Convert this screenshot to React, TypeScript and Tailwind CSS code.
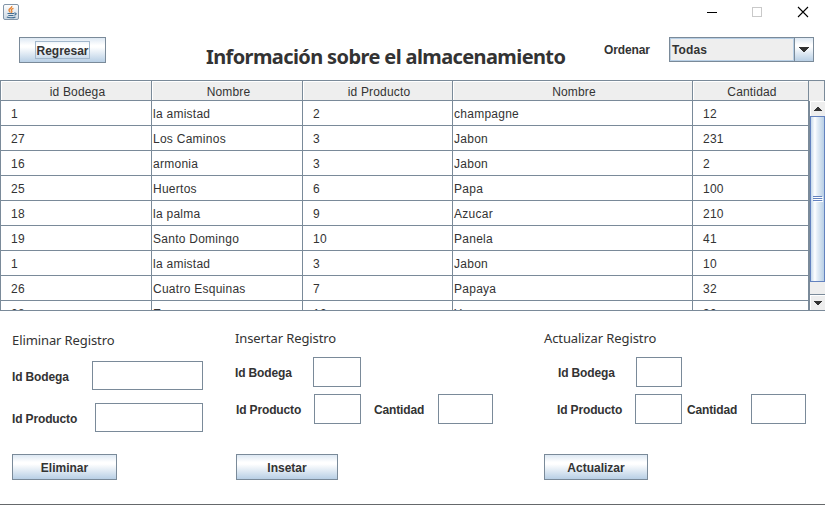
import React from "react";

const columns = [
  { title: "id Bodega", width: "w-[151px]", cell: "pl-[10px]" },
  { title: "Nombre", width: "w-[151px]", cell: "pl-px" },
  { title: "id Producto", width: "w-[150px]", cell: "pl-[10px]" },
  { title: "Nombre", width: "w-[240px]", cell: "pl-px" },
  { title: "Cantidad", width: "w-[116px]", cell: "pl-[10px]" },
];

const rows = [
  ["1", "la amistad", "2", "champagne", "12"],
  ["27", "Los Caminos", "3", "Jabon", "231"],
  ["16", "armonia", "3", "Jabon", "2"],
  ["25", "Huertos", "6", "Papa", "100"],
  ["18", "la palma", "9", "Azucar", "210"],
  ["19", "Santo Domingo", "10", "Panela", "41"],
  ["1", "la amistad", "3", "Jabon", "10"],
  ["26", "Cuatro Esquinas", "7", "Papaya", "32"],
  ["28", "Esperanza", "12", "Yuca", "30"],
];

const gradient = "bg-[linear-gradient(180deg,#dde8f3_0%,#ffffff_30%,#ffffff_38%,#b8cfe5_100%)]";

function Button({ children, className }: { children: React.ReactNode; className: string }) {
  return (
    <button
      className={`flex h-[26px] items-center justify-center border border-[#7a8a99] text-[12px] font-bold leading-none ${gradient} ${className}`}
    >
      {children}
    </button>
  );
}

function Field({ className }: { className: string }) {
  return (
    <div className={`shrink-0 border border-[#7a8a99] bg-white p-0 ${className}`}>
      <input className="block h-full w-full bg-transparent px-1 text-[12px] outline-none" />
    </div>
  );
}

function Label({ children, className = "" }: { children: React.ReactNode; className?: string }) {
  return (
    <label className={`shrink-0 whitespace-nowrap text-[12px] font-bold leading-[16px] tracking-[-0.14px] ${className}`}>
      {children}
    </label>
  );
}

function Heading({ children, className = "" }: { children: React.ReactNode; className?: string }) {
  return (
    <h2 className={`whitespace-nowrap font-['Noto_Sans',sans-serif] text-[13px] font-normal leading-[20px] tracking-[-0.1px] ${className}`}>
      {children}
    </h2>
  );
}

function JavaIcon() {
  return (
    <svg width="16" height="16" viewBox="0 0 16 16" className="mt-[4px] ml-[3px] shrink-0">
      <defs>
        <linearGradient id="tile" x1="0" y1="0" x2="0" y2="1">
          <stop offset="0" stopColor="#ffffff" />
          <stop offset="1" stopColor="#cbd7e2" />
        </linearGradient>
      </defs>
      <rect x="0.5" y="0.5" width="15" height="15" rx="1.5" fill="url(#tile)" stroke="#8295a8" />
      <path d="M8.8 2C9.5 4 5.5 4.6 6 6.3C6.2 7.3 7.1 7.5 7.2 8.5M10.5 4.3C7.6 5.3 8.1 6.2 8.8 7C9.3 7.7 8.8 8.2 8.2 8.7" fill="none" stroke="#e78330" strokeWidth="1.3" />
      <path d="M4.5 9.5H11M5.3 11.5H10.5M3.8 13.1C6 14.1 10.5 14 12.5 12.9M11.2 9.1C14 8.6 13.7 10.7 11.3 11.3" fill="none" stroke="#426d92" strokeWidth="1.1" />
    </svg>
  );
}

function Arrow({ up = false }: { up?: boolean }) {
  return (
    <svg width="8" height="4" viewBox="0 0 8 4" shapeRendering="crispEdges">
      <path d={up ? "M3 0H5V1H6V2H7V3H8V4H0V3H1V2H2V1H3Z" : "M0 0H8V1H7V2H6V3H5V4H3V3H2V2H1V1H0Z"} fill="#333" />
    </svg>
  );
}

function Scrollbar() {
  return (
    <div className="flex h-[209px] w-[16px] flex-col border-l border-[#7a8a99] bg-[#eee]">
      <div className="flex h-[15px] items-center justify-center border-l border-t border-white bg-[#eee]">
        <Arrow up />
      </div>
      <div className="flex h-[166px] items-center justify-center border border-[#6382bf] bg-[linear-gradient(90deg,#c5d9ec_0%,#ffffff_30%,#e8f0f8_45%,#b8cfe5_100%)]">
        <svg width="10" height="6" viewBox="0 0 10 6" shapeRendering="crispEdges">
          <path d="M0 .5H9M0 2.5H9M0 4.5H9" stroke="#6382bf" />
          <path d="M1 1.5H10M1 3.5H10M1 5.5H10" stroke="#fff" />
        </svg>
      </div>
      <div className="h-[12px]" />
      <div className="flex h-[16px] items-center justify-center border-t border-[#7a8a99] bg-[#eee] shadow-[inset_1px_1px_0_#fff]">
        <Arrow />
      </div>
    </div>
  );
}

function DataTable() {
  return (
    <section className="h-[231px] w-[825px] overflow-hidden border-b border-l border-t border-[#7a8a99]">
      <div className="flex h-[20px] text-[12px]">
        {columns.map((c, i) => (
          <div
            key={i}
            className={`flex shrink-0 items-center justify-center border-b border-r border-[#7a8a99] bg-[#eee] pl-[3px] pt-[2px] leading-[16px] tracking-[0.16px] shadow-[inset_1px_1px_0_#fff] ${c.width}`}
          >
            {c.title}
          </div>
        ))}
        <div className="grow border-r border-[#7a8a99] bg-[#eee]" />
      </div>
      <div className="flex h-[209px]">
        <div className="h-[209px] w-[808px] shrink-0 overflow-hidden">
          {rows.map((row, r) => (
            <div key={r} className="flex h-[25px]">
              {row.map((value, i) => (
                <div
                  key={i}
                  className={`shrink-0 whitespace-nowrap border-b border-r border-[#7a8a99] pt-[5px] text-[12px] leading-[16px] tracking-[0.26px] ${columns[i].width} ${columns[i].cell}`}
                >
                  {value}
                </div>
              ))}
            </div>
          ))}
        </div>
        <Scrollbar />
      </div>
    </section>
  );
}

export default function App() {
  return (
    <main className="flex h-[505px] w-[825px] flex-col overflow-hidden border-b border-[#65686b] bg-white font-['Liberation_Sans',Arial,sans-serif] text-[#333]">
      <header className="flex h-[24px] shrink-0 justify-between">
        <JavaIcon />
        <svg width="125" height="24" viewBox="0 0 125 24" fill="none">
          <path d="M7 12.5H17" stroke="#000" shapeRendering="crispEdges" />
          <rect x="52.5" y="7.5" width="9" height="9" stroke="#c9c9c9" shapeRendering="crispEdges" />
          <path d="M98 7L108 17M108 7L98 17" stroke="#000" strokeWidth="1.1" />
        </svg>
      </header>

      <div className="flex h-[56px] shrink-0 items-start">
        <Button className="ml-[19px] mt-[13px] w-[87px]">
          <span className="flex h-[18px] w-[55px] items-center justify-center border border-[#a3b8cc] pt-[2px]">Regresar</span>
        </Button>
        <h1 className="ml-[100px] mt-[19px] w-[398px] whitespace-nowrap font-['Noto_Sans',sans-serif] text-[20px] font-bold leading-[28px] tracking-[-0.61px]">
          Información sobre el almacenamiento
        </h1>
        <Label className="mt-[18px] w-[65px]">Ordenar</Label>
        <div className="mt-[13px] flex h-[25px] w-[145px] border border-[#7a8a99] bg-[#eee]">
          <div className="w-[124px] border border-[#b8cfe5] pl-px pt-[3px] text-[12px] font-bold leading-[16px] tracking-[0.12px]">
            Todas
          </div>
          <div className={`flex w-[19px] items-center justify-center border-l border-[#7a8a99] ${gradient}`}>
            <svg width="10" height="5" viewBox="0 0 10 5" shapeRendering="crispEdges">
              <path d="M0 0H10V1H9V2H8V3H7V4H6V5H4V4H3V3H2V2H1V1H0Z" fill="#333" />
            </svg>
          </div>
        </div>
      </div>

      <DataTable />

      <div className="flex h-[193px] shrink-0 items-start pl-[12px]">
        <section className="w-[223px] pt-[19px]">
          <Heading>Eliminar Registro</Heading>
          <div className="mt-[11px] flex h-[29px] items-center">
            <Label className="w-[80px] pt-[2px]">Id Bodega</Label>
            <Field className="h-[29px] w-[111px]" />
          </div>
          <div className="mt-[13px] flex h-[29px] items-center">
            <Label className="w-[83px] pt-[2px]">Id Producto</Label>
            <Field className="h-[29px] w-[108px]" />
          </div>
          <Button className="mt-[22px] w-[105px] pt-[2px]">Eliminar</Button>
        </section>

        <section className="w-[309px] pt-[17px]">
          <Heading>Insertar Registro</Heading>
          <div className="mt-[9px] flex h-[30px] items-center">
            <Label className="w-[78px] pt-[2px]">Id Bodega</Label>
            <Field className="h-[30px] w-[48px]" />
          </div>
          <div className="mt-[7px] flex h-[30px] items-center">
            <Label className="w-[79px] pl-px pt-[2px]">Id Producto</Label>
            <Field className="h-[30px] w-[47px]" />
            <Label className="ml-[13px] w-[64px] pt-[2px]">Cantidad</Label>
            <Field className="h-[30px] w-[55px]" />
          </div>
          <Button className="ml-px mt-[30px] w-[102px] pt-[2px]">Insetar</Button>
        </section>

        <section className="w-[281px] pt-[17px]">
          <Heading>Actualizar Registro</Heading>
          <div className="mt-[9px] flex h-[30px] items-center">
            <Label className="w-[92px] pl-[14px] pt-[2px]">Id Bodega</Label>
            <Field className="h-[30px] w-[46px]" />
          </div>
          <div className="mt-[7px] flex h-[30px] items-center">
            <Label className="w-[91px] pl-[13px] pt-[2px]">Id Producto</Label>
            <Field className="h-[30px] w-[47px]" />
            <Label className="ml-[5px] w-[64px] pt-[2px]">Cantidad</Label>
            <Field className="h-[30px] w-[55px]" />
          </div>
          <Button className="mt-[30px] w-[104px] pt-[2px]">Actualizar</Button>
        </section>
      </div>
    </main>
  );
}
